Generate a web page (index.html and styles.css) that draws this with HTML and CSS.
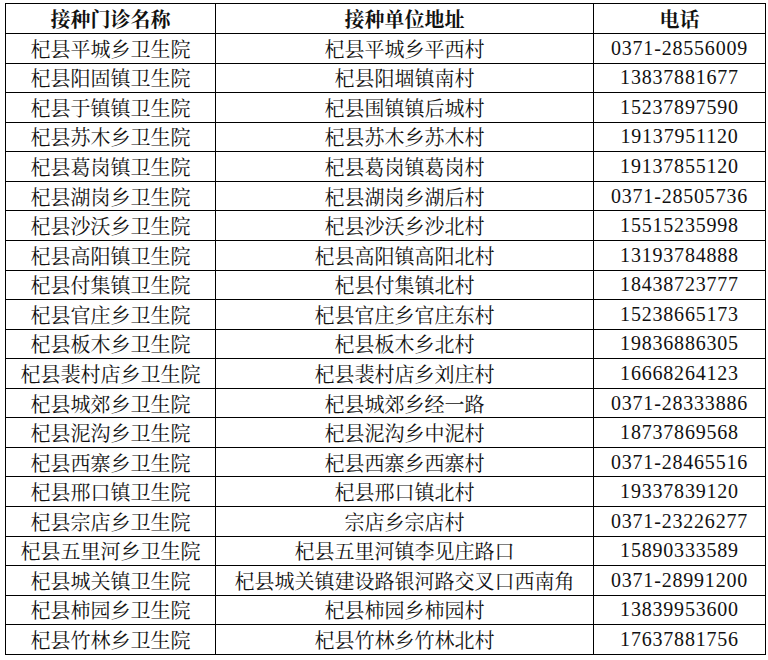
FILE: index.html
```html
<!DOCTYPE html>
<html lang="zh-CN">
<head>
<meta charset="utf-8">
<title>接种门诊</title>
<link rel="stylesheet" href="styles.css">
</head>
<body>
<table class="sheet">
  <colgroup>
    <col class="c-name">
    <col class="c-addr">
    <col class="c-tel">
  </colgroup>
  <thead>
    <tr class="head"><th>接种门诊名称</th><th>接种单位地址</th><th>电话</th></tr>
  </thead>
  <tbody>
    <tr><td>杞县平城乡卫生院</td><td>杞县平城乡平西村</td><td class="num">0371-28556009</td></tr>
    <tr><td>杞县阳固镇卫生院</td><td>杞县阳堌镇南村</td><td class="num">13837881677</td></tr>
    <tr><td>杞县于镇镇卫生院</td><td>杞县围镇镇后城村</td><td class="num">15237897590</td></tr>
    <tr><td>杞县苏木乡卫生院</td><td>杞县苏木乡苏木村</td><td class="num">19137951120</td></tr>
    <tr><td>杞县葛岗镇卫生院</td><td>杞县葛岗镇葛岗村</td><td class="num">19137855120</td></tr>
    <tr><td>杞县湖岗乡卫生院</td><td>杞县湖岗乡湖后村</td><td class="num">0371-28505736</td></tr>
    <tr><td>杞县沙沃乡卫生院</td><td>杞县沙沃乡沙北村</td><td class="num">15515235998</td></tr>
    <tr><td>杞县高阳镇卫生院</td><td>杞县高阳镇高阳北村</td><td class="num">13193784888</td></tr>
    <tr><td>杞县付集镇卫生院</td><td>杞县付集镇北村</td><td class="num">18438723777</td></tr>
    <tr><td>杞县官庄乡卫生院</td><td>杞县官庄乡官庄东村</td><td class="num">15238665173</td></tr>
    <tr><td>杞县板木乡卫生院</td><td>杞县板木乡北村</td><td class="num">19836886305</td></tr>
    <tr><td>杞县裴村店乡卫生院</td><td>杞县裴村店乡刘庄村</td><td class="num">16668264123</td></tr>
    <tr><td>杞县城郊乡卫生院</td><td>杞县城郊乡经一路</td><td class="num">0371-28333886</td></tr>
    <tr><td>杞县泥沟乡卫生院</td><td>杞县泥沟乡中泥村</td><td class="num">18737869568</td></tr>
    <tr><td>杞县西寨乡卫生院</td><td>杞县西寨乡西寨村</td><td class="num">0371-28465516</td></tr>
    <tr><td>杞县邢口镇卫生院</td><td>杞县邢口镇北村</td><td class="num">19337839120</td></tr>
    <tr><td>杞县宗店乡卫生院</td><td>宗店乡宗店村</td><td class="num">0371-23226277</td></tr>
    <tr><td>杞县五里河乡卫生院</td><td>杞县五里河镇李见庄路口</td><td class="num">15890333589</td></tr>
    <tr><td>杞县城关镇卫生院</td><td>杞县城关镇建设路银河路交叉口西南角</td><td class="num">0371-28991200</td></tr>
    <tr><td>杞县柿园乡卫生院</td><td>杞县柿园乡柿园村</td><td class="num">13839953600</td></tr>
    <tr><td>杞县竹林乡卫生院</td><td>杞县竹林乡竹林北村</td><td class="num">17637881756</td></tr>
  </tbody>
</table>
</body>
</html>
```
FILE: styles.css
```css
html, body {
  margin: 0;
  padding: 0;
  background: #ffffff;
}
body {
  padding: 3px 0 0 5px;
  font-family: "Noto Serif CJK SC", "Noto Sans CJK SC", serif;
  color: #111111;
}
.sheet {
  border-collapse: collapse;
  table-layout: fixed;
  width: 760px;
}
.c-name { width: 210px; }
.c-addr { width: 378px; }
.c-tel { width: 172px; }
.sheet th,
.sheet td {
  border: 1px solid #000000;
  padding: 0;
  text-align: center;
  vertical-align: middle;
  font-size: 20px;
  line-height: 21px;
  white-space: nowrap;
  overflow: hidden;
}
.sheet th {
  font-weight: 700;
}
.head {
  height: 30px;
}
.sheet tbody tr {
  height: 29.57px;
}
.sheet td.num {
  font-family: "Liberation Serif", serif;
  font-size: 20px;
  letter-spacing: 0.8px;
}
```
